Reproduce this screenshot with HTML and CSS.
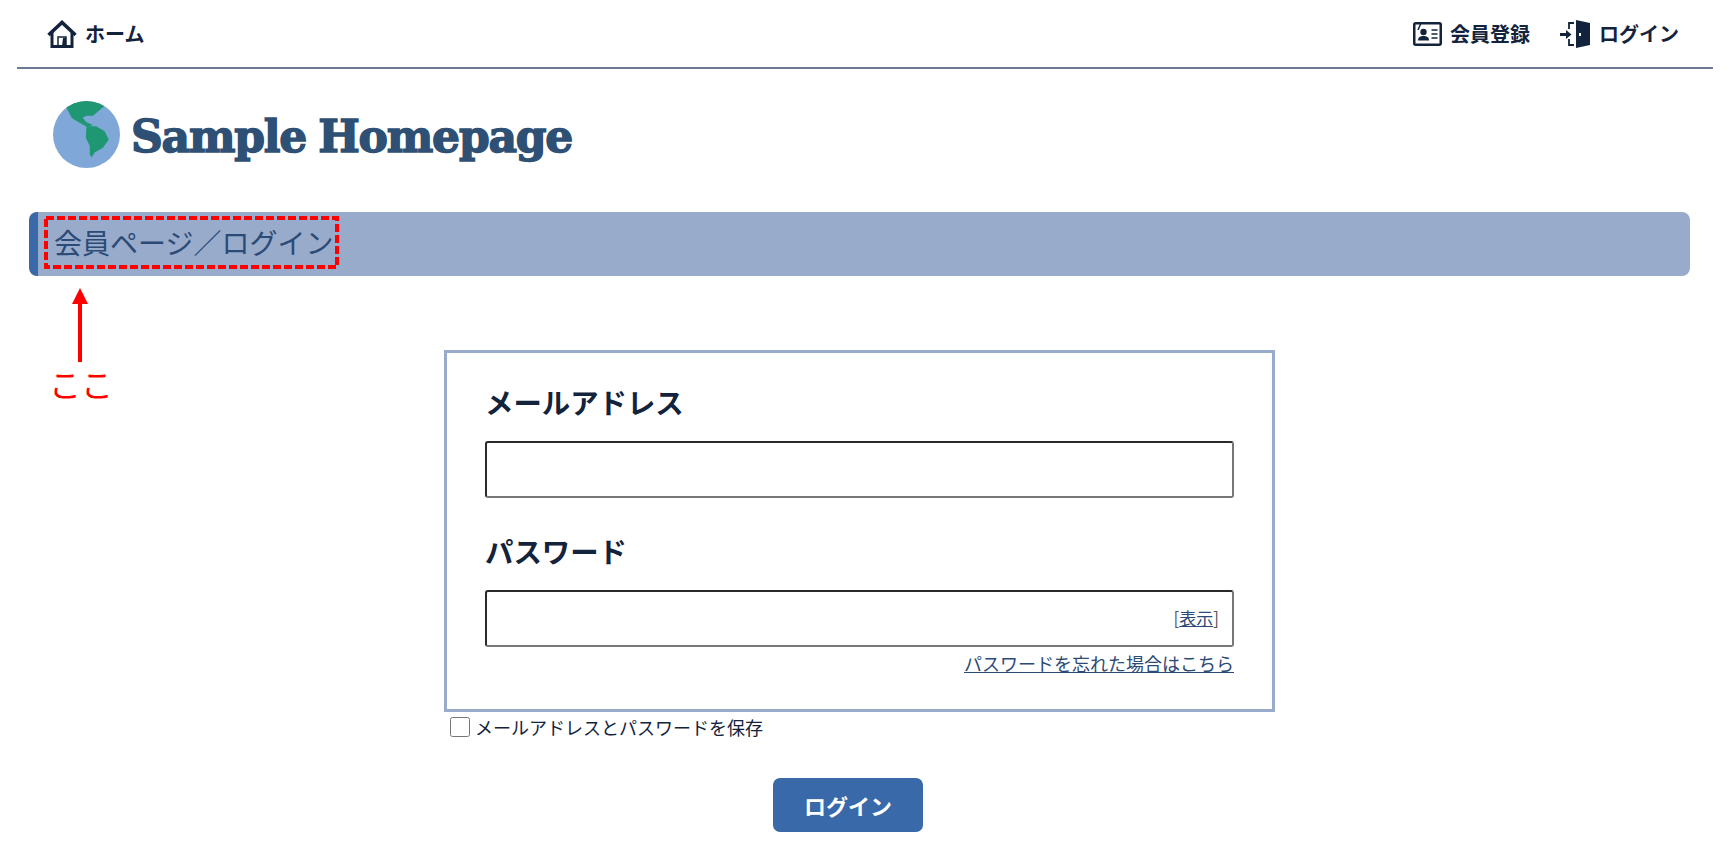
FILE: index.html
```html
<!DOCTYPE html>
<html lang="ja">
<head>
    <meta charset="UTF-8">
    <meta name="viewport" content="width=device-width, initial-scale=1.0">
    <title>Sample Homepage</title>
    <link rel="stylesheet" href="styles.css">
</head>
<body>
    <header class="topnav">
        <a class="navlink" href="#">
            <svg class="ico-home" viewBox="0 0 30 28" fill="none" stroke="#13233c">
                <path d="M1.500 15 15 2.500 28.500 15" stroke-width="3.500"/>
                <path d="M5 12v14.500h20V12" stroke-width="3"/>
                <path d="M11 26v-9h8v9" stroke-width="1.500"/>
                <path d="M16 18h3v8h-4z" fill="#13233c" stroke="none"/>
            </svg>
            ホーム
        </a>
        <div class="navright">
            <a class="navlink" href="#">
                <svg class="ico-card" viewBox="0 0 29 24" fill="none" stroke="#13233c">
                    <rect x="1.250" y="1.250" width="26.500" height="21.500" rx="1.500" stroke-width="2.500"/>
                    <path d="M8 1 5 8" stroke-width="1.500"/>
                    <circle cx="10.500" cy="10" r="3.200" fill="#13233c" stroke="none"/>
                    <path d="M5 18.500c0-3.500 2.500-4.500 5.500-4.500s5.500 1 5.500 4.500z" fill="#13233c" stroke="none"/>
                    <path d="M18.500 8h6M18.500 12h6M18.500 16h6" stroke-width="1.500"/>
                </svg>
                会員登録
            </a>
            <a class="navlink" href="#">
                <svg class="ico-door" viewBox="0 0 31 28" fill="none" stroke="#13233c">
                    <path d="M14 3H9v6M9 19v6h5" stroke-width="1.800"/>
                    <path d="M0 14.500h7" stroke-width="3"/>
                    <path d="M6 10l5.500 4.500L6 19z" fill="#13233c" stroke="none"/>
                    <path d="M16 0 30 3V25L16 28z" fill="#13233c" stroke="none"/>
                    <rect x="19" y="13" width="2" height="3" fill="#fff" stroke="none"/>
                </svg>
                ログイン
            </a>
        </div>
    </header>

    <div class="logo">
        <svg class="globe" viewBox="68 33 204 204">
            <defs>
                <clipPath id="earth"><circle cx="170" cy="135" r="102"/></clipPath>
            </defs>
            <circle cx="170" cy="135" r="102" fill="#7fa8d8"/>
            <g clip-path="url(#earth)" fill="#1f9772">
                <path d="M110 25H228V45L205 65 190 78 170 78 158 84 170 98 190 106 172 112 150 100 125 85 110 55Z"/>
                <path d="M170 110 200 110 225 125 238 150 220 175 195 190 185 205 180 195 180 170 168 145Z"/>
            </g>
        </svg>
        <span class="logotext">Sample Homepage</span>
    </div>

    <main class="content">
        <h1 class="pagetitle">会員ページ／ログイン</h1>

        <!-- annotation -->
        <svg class="mark" viewBox="0 0 295 53" fill="none">
            <rect x="2" y="2" width="291" height="49" stroke="#ff0000" stroke-width="4" stroke-dasharray="8 3"/>
        </svg>
        <svg class="arrow" viewBox="0 0 16 74">
            <path d="M8 0 16 16H10V74H6V16H0Z" fill="#ff0000"/>
        </svg>
        <div class="here">ここ</div>

        <form class="loginbox">
            <label class="fieldname">メールアドレス</label>
            <input class="field" type="text">
            <label class="fieldname second">パスワード</label>
            <div class="pwwrap">
                <input class="field" type="password">
                <span class="showpw">[<a href="#">表示</a>]</span>
            </div>
            <div class="forgot"><a href="#">パスワードを忘れた場合はこちら</a></div>
        </form>

        <label class="save">
            <input type="checkbox">
            メールアドレスとパスワードを保存
        </label>

        <button class="loginbtn" type="button">ログイン</button>
    </main>
</body>
</html>
```

FILE: styles.css
```css
body{
    margin: 0;
    padding: 0;
    color: #13233c;
    background: #fff;
    font-family: "Noto Sans CJK JP", "Noto Sans", sans-serif;
}
a{
    color: inherit;
    text-decoration: none;
}

/* top nav */
.topnav{
    display: flex;
    justify-content: space-between;
    align-items: center;
    box-sizing: border-box;
    height: 69px;
    margin: 0 14px 0 17px;
    padding: 0 34px 0 30px;
    border-bottom: 2px solid #6b7a90;
}
.navright{
    display: flex;
    gap: 30px;
}
.navlink{
    display: flex;
    align-items: center;
    gap: 8px;
    font-size: 20px;
    font-weight: bold;
}
.ico-home{
    width: 30px;
    height: 28px;
}
.ico-card{
    width: 29px;
    height: 24px;
}
.ico-door{
    width: 31px;
    height: 28px;
}

/* logo */
.logo{
    display: flex;
    align-items: center;
    gap: 10px;
    height: 67px;
    margin: 32px 0 44px 52px;
}
.globe{
    width: 69px;
    height: 67px;
}
.logotext{
    padding-top: 3px;
    font-family: "DejaVu Serif", serif;
    font-size: 44px;
    font-weight: bold;
    letter-spacing: -1.200px;
    word-spacing: -2px;
    color: #2f5075;
    -webkit-text-stroke: 1.500px #2f5075;
}

/* page */
.content{
    position: relative;
    width: 1661px;
    margin-left: 29px;
}
.pagetitle{
    margin: 0;
    height: 64px;
    padding-left: 16px;
    box-sizing: border-box;
    border-left: 9px solid #3a69a9;
    border-radius: 8px;
    background: #98abcb;
    color: #2b4a75;
    font-size: 28px;
    font-weight: normal;
    line-height: 60px;
}

/* red notes drawn over the page */
.mark{
    position: absolute;
    left: 15px;
    top: 4px;
    width: 295px;
    height: 53px;
}
.arrow{
    position: absolute;
    left: 43px;
    top: 76px;
    width: 16px;
    height: 74px;
}
.here{
    position: absolute;
    left: 20px;
    top: 147px;
    color: #ff0000;
    font-size: 32px;
    line-height: 48px;
}

/* form */
.loginbox{
    width: 831px;
    box-sizing: border-box;
    margin: 74px auto 0;
    padding: 29px 38px 32px 38px;
    border: 3px solid #98abcb;
}
.fieldname{
    display: block;
    margin-bottom: 19px;
    font-size: 28.400px;
    font-weight: bold;
    line-height: 40px;
}
.second{
    margin-top: 33px;
}
.field{
    display: block;
    width: 100%;
    height: 57px;
    box-sizing: border-box;
    border: 2px solid;
    border-color: #2a2a2a #777 #777 #2a2a2a;
    border-radius: 3px;
    background: #fff;
}
.pwwrap{
    position: relative;
}
.showpw{
    position: absolute;
    right: 15px;
    top: 15px;
    color: #555;
    font-size: 17px;
    line-height: 26px;
}
.showpw a{
    color: #2b4a75;
    text-decoration: underline;
}
.forgot{
    margin-top: 3px;
    text-align: right;
    font-size: 18px;
    line-height: 27px;
}
.forgot a{
    color: #2b4a75;
    text-decoration: underline;
}
.save{
    display: flex;
    align-items: center;
    gap: 5px;
    height: 20px;
    margin: 5px 0 0 421px;
    font-size: 18px;
}
.save input{
    width: 20px;
    height: 20px;
    margin: 0;
}
.loginbtn{
    display: block;
    width: 150px;
    height: 54px;
    margin: 41px 0 0 744px;
    border: none;
    border-radius: 7px;
    background: #3a69a9;
    color: #fff;
    font-family: inherit;
    font-size: 22px;
    font-weight: bold;
}
```
